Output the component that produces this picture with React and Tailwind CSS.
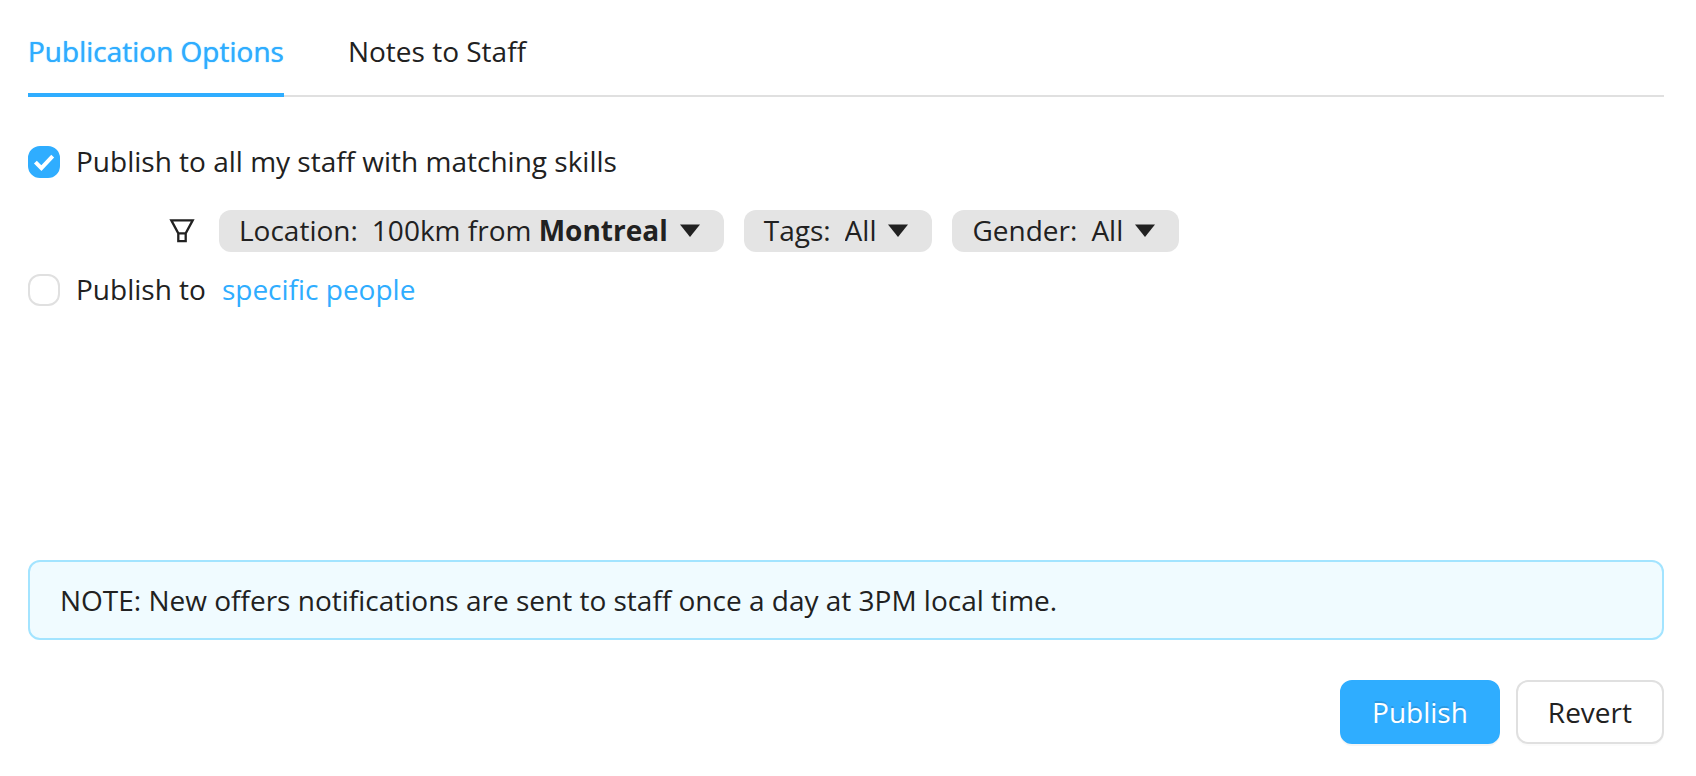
import { useState } from "react";

const tabs = ["Publication Options", "Notes to Staff"];

function Caret() {
  return (
    <svg viewBox="0 0 20 13" className="h-[13px] w-5 shrink-0 fill-[#212121]" aria-hidden="true">
      <path d="M0 .5h20L10 12.9z" />
    </svg>
  );
}

function FilterIcon() {
  return (
    <svg
      viewBox="0 0 26 24"
      className="h-6 w-[26px] shrink-0 fill-none stroke-[#212121] stroke-[2.3]"
      aria-hidden="true"
    >
      <path d="M2.3 1.3h21.4L16.7 14.3H9.3zM9.3 14.3h7.4v7.8H9.3z" />
    </svg>
  );
}

function Checkbox({ id, checked, onChange }) {
  return (
    <span className="grid size-8 shrink-0">
      <input
        id={id}
        type="checkbox"
        checked={checked}
        onChange={onChange}
        className="col-start-1 row-start-1 size-8 appearance-none rounded-xl border-2 border-[#e0e0e0] bg-white checked:border-[#2fadff] checked:bg-[#2fadff]"
      />
      {checked && (
        <svg
          viewBox="0 0 32 32"
          className="pointer-events-none col-start-1 row-start-1 size-8 fill-none stroke-white stroke-4"
          aria-hidden="true"
        >
          <path d="M7.4 16.2l6 6L24.7 10.2" />
        </svg>
      )}
    </span>
  );
}

function SelectChip({ id, label, options }) {
  return (
    <div className="flex h-[42px] items-center rounded-xl bg-[#e4e4e4] pr-6 pb-[2px] pl-5">
      <label htmlFor={id} className="mr-[14px]">
        {label}:
      </label>
      <select id={id} className="mr-3 field-sizing-content appearance-none bg-transparent">
        {options.map((option) => (
          <option key={option}>{option}</option>
        ))}
      </select>
      <Caret />
    </div>
  );
}

export default function App() {
  const [active, setActive] = useState(0);
  const [all, setAll] = useState(true);
  const [specific, setSpecific] = useState(false);

  return (
    <main className="flex min-h-screen flex-col bg-white pr-8 pb-8 pl-7 font-['Open_Sans',sans-serif] text-[28px] leading-10 text-[#212121]">
      <div role="tablist" className="flex gap-16 border-b-2 border-[#e0e0e0] pt-[31px]">
        {tabs.map((tab, i) => (
          <button
            key={tab}
            type="button"
            role="tab"
            aria-selected={active === i}
            onClick={() => setActive(i)}
            className={
              active === i
                ? "-mb-[2px] border-b-4 border-[#2fadff] pb-[22px] text-[#2fadff] text-shadow-[0_0_1px_#2fadff]"
                : "-mb-[2px] border-b-4 border-transparent pb-[22px]"
            }
          >
            {tab}
          </button>
        ))}
      </div>

      <section className="flex flex-1 flex-col pt-11">
        <div className="flex items-center gap-4">
          <Checkbox id="all" checked={all} onChange={() => setAll(!all)} />
          <label htmlFor="all" className="pb-[2px]">
            Publish to all my staff with matching skills
          </label>
        </div>

        <div className="mt-[27px] mb-[17px] flex flex-wrap items-center pl-[141px]">
          <FilterIcon />
          <div className="ml-6 flex flex-wrap gap-5">
            <button
              type="button"
              aria-haspopup="dialog"
              className="flex h-[42px] items-center rounded-xl bg-[#e4e4e4] pr-6 pb-[2px] pl-5"
            >
              <span className="mr-[14px]">Location:</span>
              <span className="mr-3">
                100km from <strong>Montreal</strong>
              </span>
              <Caret />
            </button>
            <SelectChip id="tags" label="Tags" options={["All"]} />
            <SelectChip id="gender" label="Gender" options={["All"]} />
          </div>
        </div>

        <div className="flex items-center gap-4">
          <Checkbox id="specific" checked={specific} onChange={() => setSpecific(!specific)} />
          <label htmlFor="specific" className="pb-[2px]">
            Publish to
          </label>
          <a href="#people" className="pb-[2px] text-[#2fadff]">
            specific people
          </a>
        </div>
      </section>

      <p className="rounded-xl border-2 border-[#a3e4ff] bg-[#f0fbff] px-[30px] py-[18px]">
        NOTE: New offers notifications are sent to staff once a day at 3PM local time.
      </p>

      <div className="mt-10 flex justify-end gap-4">
        <button
          type="button"
          className="h-16 rounded-xl border-2 border-[#2fadff] bg-[#2fadff] px-[30px] text-white shadow-[0_2px_0_rgba(0,0,0,0.04)] text-shadow-[0_-2px_0_rgba(0,0,0,0.12)]"
        >
          Publish
        </button>
        <button
          type="button"
          className="h-16 rounded-xl border-2 border-[#e0e0e0] bg-white px-[30px] shadow-[0_2px_0_rgba(0,0,0,0.015)]"
        >
          Revert
        </button>
      </div>
    </main>
  );
}
